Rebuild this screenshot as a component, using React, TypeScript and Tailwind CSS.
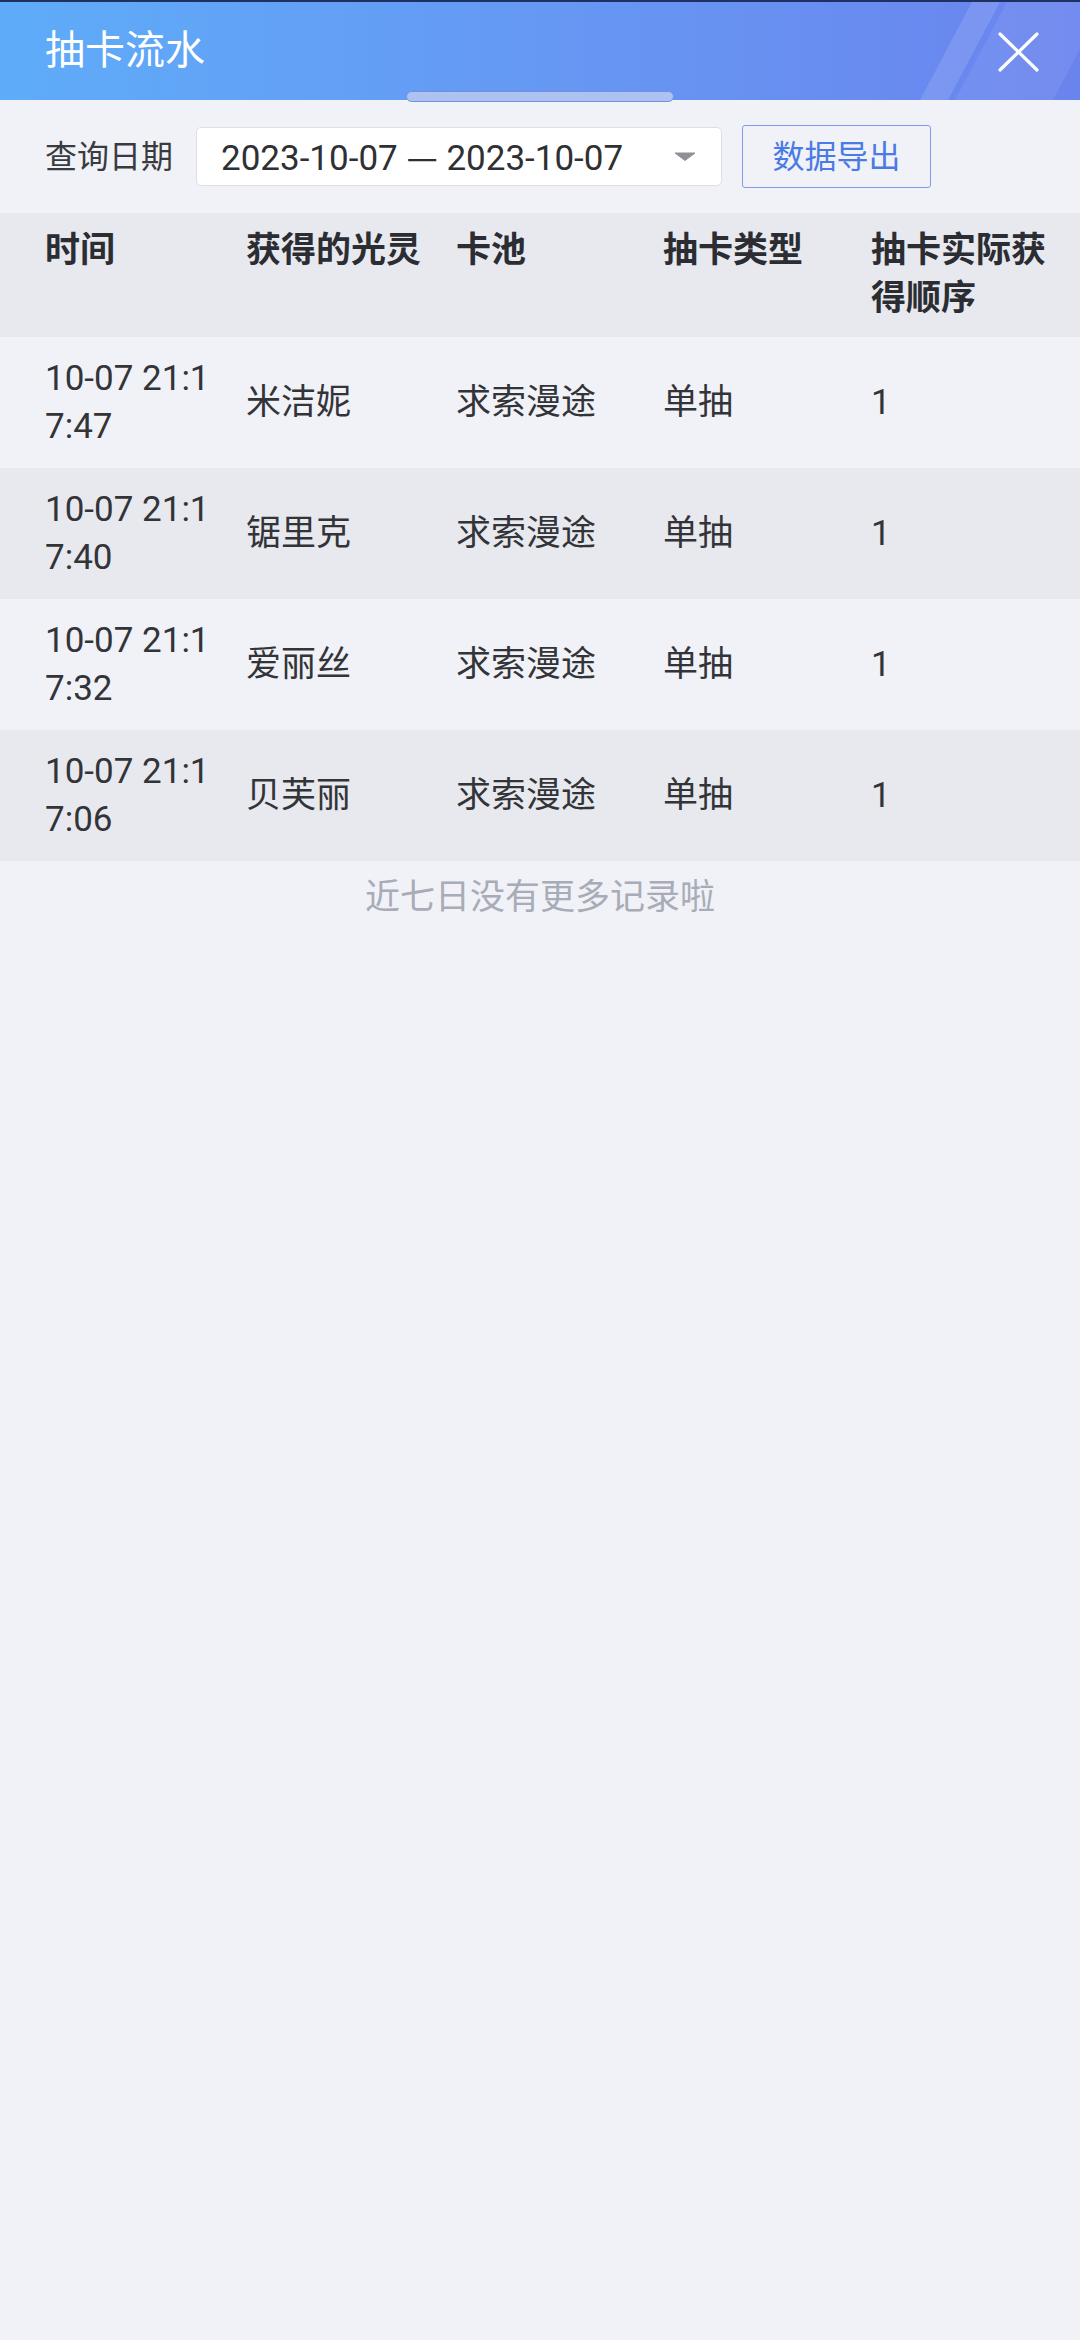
import React from "react";

const rows = [
  { time: "10-07 21:17:47", name: "米洁妮", pool: "求索漫途", type: "单抽", order: "1" },
  { time: "10-07 21:17:40", name: "锯里克", pool: "求索漫途", type: "单抽", order: "1" },
  { time: "10-07 21:17:32", name: "爱丽丝", pool: "求索漫途", type: "单抽", order: "1" },
  { time: "10-07 21:17:06", name: "贝芙丽", pool: "求索漫途", type: "单抽", order: "1" },
];

export default function App() {
  return (
    <div className="min-h-[2340px] w-[1080px] bg-[#f1f2f7] font-[Roboto,'Noto_Sans_CJK_SC',sans-serif] text-[#333438]">
      {/* Header */}
      <div className="relative h-[100px] border-t-2 border-[#1f3160] bg-gradient-to-r from-[#5eacf9] to-[#6a84ee]">
        <svg
          className="pointer-events-none absolute inset-0 h-full w-full"
          viewBox="0 0 1080 98"
          preserveAspectRatio="none"
        >
          <polygon points="920,98 948,98 1000,0 972,0" fill="#ffffff" fillOpacity="0.12" />
          <polygon points="955,98 1053,98 1080,47 1080,0 1007,0" fill="#ffffff" fillOpacity="0.07" />
        </svg>
        <div className="relative flex h-full items-center justify-between pl-[45px] pr-[41px]">
          <div className="text-[40px] leading-[48px] text-white">抽卡流水</div>
          <svg width="41" height="40" viewBox="0 0 41 40" className="mt-[1px]">
            <line x1="2" y1="2" x2="39" y2="38" stroke="#ffffff" strokeWidth="3.2" strokeLinecap="round" />
            <line x1="39" y1="2" x2="2" y2="38" stroke="#ffffff" strokeWidth="3.2" strokeLinecap="round" />
          </svg>
        </div>
        <div className="absolute left-[406px] top-[89px] h-[11px] w-[268px] rounded-full border border-[#7590d6] bg-[#abc2f3]" />
      </div>

      {/* Filter row */}
      <div className="flex h-[113px] items-center pl-[45px]">
        <div className="text-[32px] leading-[40px] text-[#3a3b3f]">查询日期</div>
        <div className="ml-[23px] flex h-[59px] w-[526px] items-center justify-between rounded-[5px] border border-[#dcdfe6] bg-white pl-[24px] pr-[25px]">
          <span className="text-[35px] leading-[40px] text-[#2f3033]">
            2023-10-07 <span className="font-['Noto_Sans_CJK_SC',sans-serif]">—</span> 2023-10-07
          </span>
          <svg width="22" height="9" viewBox="0 0 22 9">
            <path d="M1 1 L21 1 L11 8.5 Z" fill="#8f9196" stroke="#8f9196" strokeWidth="1" strokeLinejoin="round" />
          </svg>
        </div>
        <div className="ml-[20px] flex h-[63px] w-[189px] items-center justify-center rounded-[3px] border border-[#7d9de8] text-[32px] leading-[40px] text-[#4a7ae4]">
          数据导出
        </div>
      </div>

      {/* Table header */}
      <div className="grid grid-cols-[201px_210px_207px_208px_1fr] bg-[#e7e9ef] py-[14px] pl-[45px] text-[35px] font-bold leading-[48px] text-[#2b2d33]">
        <div className="break-all pr-[26px]">时间</div>
        <div className="break-all pr-[20px]">获得的光灵</div>
        <div className="break-all pr-[20px]">卡池</div>
        <div className="break-all pr-[20px]">抽卡类型</div>
        <div className="break-all pr-[20px]">抽卡实际获得顺序</div>
      </div>

      {/* Rows */}
      {rows.map((r, i) => (
        <div
          key={i}
          className={
            "grid h-[131px] grid-cols-[201px_210px_207px_208px_1fr] items-center pl-[45px] text-[35px] leading-[48px] " +
            (i % 2 === 1 ? "bg-[#e7e9ef]" : "bg-[#f0f2f7]")
          }
        >
          <div className="break-all pr-[26px]">{r.time}</div>
          <div className="break-all pr-[20px]">{r.name}</div>
          <div className="break-all pr-[20px]">{r.pool}</div>
          <div className="break-all pr-[20px]">{r.type}</div>
          <div className="break-all pr-[20px]">{r.order}</div>
        </div>
      ))}

      {/* Footer note */}
      <div className="pt-[13px] text-center text-[35px] leading-[48px] text-[#a8acb7]">近七日没有更多记录啦</div>
    </div>
  );
}
